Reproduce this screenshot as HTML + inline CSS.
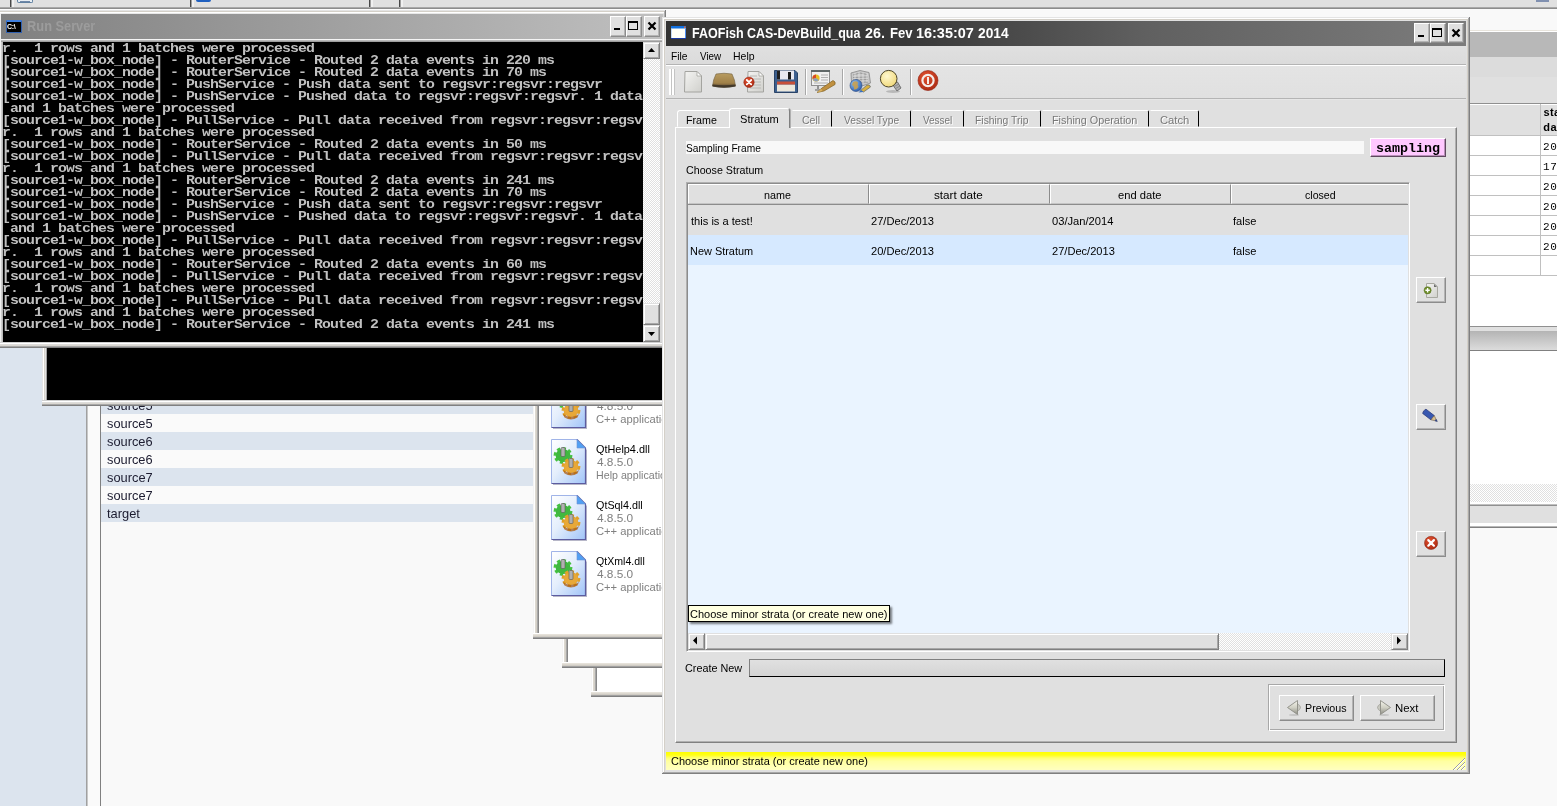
<!DOCTYPE html><html><head><meta charset="utf-8"><title>FAOFish CAS</title><style>
*{box-sizing:border-box;margin:0;padding:0}
html,body{width:1557px;height:806px;overflow:hidden;background:#f9f9f9}
body{position:relative;font-family:"Liberation Sans",sans-serif;font-size:11px;color:#000}
div,span,svg,pre{position:absolute}
.btn{background:#e0e0e0;border:1px solid;border-color:#fff #8c8c8c #8c8c8c #fff;box-shadow:inset -1px -1px 0 #b4b4b4}
.con{font-family:"Liberation Mono",monospace;font-size:13px;line-height:12px;color:#c0c0c0;white-space:pre;letter-spacing:-.8px;font-weight:bold;transform:scaleX(1.142857);transform-origin:0 0}
.btn2{background:#e0e0e0;border:1px solid;border-color:#e0e0e0 #808080 #808080 #e0e0e0;box-shadow:inset 1px 1px 0 #fff,inset -1px -1px 0 #a8a8a8}
.hd{background:#e0e0e0;border:1px solid;border-color:#fff #8c8c8c #c4c4c4 #fff}
.tab{border:1px solid;border-color:#fff #000 transparent transparent;border-radius:0 2px 0 0;background:#e0e0e0}
</style></head><body><div id="w" style="left:0;top:0;width:1557px;height:806px;will-change:transform;overflow:hidden">
<div style="left:0px;top:0px;width:1557px;height:7px;background:#e0e0e0"></div>
<div style="left:0px;top:7px;width:1557px;height:1px;background:#a8a8a8"></div>
<div style="left:0px;top:8px;width:1557px;height:1px;background:#8c8c8c"></div>
<div style="left:0px;top:9px;width:1557px;height:1px;background:#fcfcfc"></div>
<div style="left:10px;top:0px;width:1px;height:7px;background:#484848"></div>
<div style="left:11px;top:0px;width:1px;height:7px;background:#a0a0a0"></div>
<div style="left:12px;top:0px;width:2px;height:7px;background:#f0f0f0"></div>
<div style="left:190px;top:0px;width:1px;height:7px;background:#484848"></div>
<div style="left:191px;top:0px;width:1px;height:7px;background:#a0a0a0"></div>
<div style="left:192px;top:0px;width:2px;height:7px;background:#f0f0f0"></div>
<div style="left:369px;top:0px;width:1px;height:7px;background:#484848"></div>
<div style="left:370px;top:0px;width:1px;height:7px;background:#a0a0a0"></div>
<div style="left:371px;top:0px;width:2px;height:7px;background:#f0f0f0"></div>
<div style="left:399px;top:0px;width:1px;height:7px;background:#484848"></div>
<div style="left:400px;top:0px;width:1px;height:7px;background:#a0a0a0"></div>
<div style="left:401px;top:0px;width:2px;height:7px;background:#f0f0f0"></div>
<div style="left:17px;top:0px;width:16px;height:3px;border:1px solid #6080a0;border-top:0;border-radius:0 0 2px 2px;background:#e8eef4"></div>
<div style="left:20px;top:1px;width:10px;height:1px;background:#7088a8"></div>
<div style="left:196px;top:0px;width:15px;height:2px;background:#2060c0;border-radius:0 0 2px 2px"></div>
<div style="left:1536px;top:0px;width:13px;height:2px;background:#8090b0"></div>
<div style="left:0px;top:10px;width:86px;height:797px;background:#dce4ee"></div>
<div style="left:86px;top:10px;width:1px;height:797px;background:#a0a0a0"></div>
<div style="left:87px;top:10px;width:1px;height:797px;background:#c8c8c8"></div>
<div style="left:88px;top:10px;width:12px;height:797px;background:#fafafa"></div>
<div style="left:100px;top:10px;width:1px;height:797px;background:#808080"></div>
<div style="left:101px;top:396px;width:432px;height:18px;background:#dce4ee"></div>
<span style="left:107.25px;top:397px;font-size:13px;line-height:17px;color:#1c1c30;white-space:pre;transform:scaleX(0.9855);transform-origin:0.35px 0;">source5</span>
<div style="left:101px;top:414px;width:432px;height:18px;background:#fafafa"></div>
<span style="left:107.25px;top:415px;font-size:13px;line-height:17px;color:#1c1c30;white-space:pre;transform:scaleX(0.9855);transform-origin:0.35px 0;">source5</span>
<div style="left:101px;top:432px;width:432px;height:18px;background:#dce4ee"></div>
<span style="left:107.25px;top:433px;font-size:13px;line-height:17px;color:#1c1c30;white-space:pre;transform:scaleX(0.9861);transform-origin:0.35px 0;">source6</span>
<div style="left:101px;top:450px;width:432px;height:18px;background:#fafafa"></div>
<span style="left:107.25px;top:451px;font-size:13px;line-height:17px;color:#1c1c30;white-space:pre;transform:scaleX(0.9861);transform-origin:0.35px 0;">source6</span>
<div style="left:101px;top:468px;width:432px;height:18px;background:#dce4ee"></div>
<span style="left:107.25px;top:469px;font-size:13px;line-height:17px;color:#1c1c30;white-space:pre;transform:scaleX(0.9881);transform-origin:0.35px 0;">source7</span>
<div style="left:101px;top:486px;width:432px;height:18px;background:#fafafa"></div>
<span style="left:107.25px;top:487px;font-size:13px;line-height:17px;color:#1c1c30;white-space:pre;transform:scaleX(0.9881);transform-origin:0.35px 0;">source7</span>
<div style="left:101px;top:504px;width:432px;height:18px;background:#dce4ee"></div>
<span style="left:107.41px;top:505px;font-size:13px;line-height:17px;color:#1c1c30;white-space:pre;transform:scaleX(0.9892);transform-origin:0.19px 0;">target</span>
<div style="left:591px;top:640px;width:75px;height:57px;background:#fff"></div><div style="left:591px;top:640px;width:6px;height:57px;background:linear-gradient(90deg,#f4f4f4 0,#f4f4f4 1px,#fff 1px,#fff 2px,#dcd8d0 2px,#dcd8d0 3px,#d4d0c8 3px,#d4d0c8 4px,#a8a8a8 4px,#a8a8a8 5px,#888 5px)"></div><div style="left:591px;top:691px;width:75px;height:6px;background:linear-gradient(0deg,#808080 0,#808080 1px,#a0a0a0 1px,#a0a0a0 2px,#ccc8c0 2px,#d4d0c8 3px,#e4e0d8 4px,#e8e4dc 5px,#fff 5px)"></div>
<div style="left:562px;top:600px;width:104px;height:68px;background:#fff"></div><div style="left:562px;top:600px;width:6px;height:68px;background:linear-gradient(90deg,#f4f4f4 0,#f4f4f4 1px,#fff 1px,#fff 2px,#dcd8d0 2px,#dcd8d0 3px,#d4d0c8 3px,#d4d0c8 4px,#a8a8a8 4px,#a8a8a8 5px,#888 5px)"></div><div style="left:562px;top:662px;width:104px;height:6px;background:linear-gradient(0deg,#808080 0,#808080 1px,#a0a0a0 1px,#a0a0a0 2px,#ccc8c0 2px,#d4d0c8 3px,#e4e0d8 4px,#e8e4dc 5px,#fff 5px)"></div>
<div style="left:533px;top:380px;width:133px;height:259px;background:#fff"></div><div style="left:533px;top:380px;width:6px;height:259px;background:linear-gradient(90deg,#f4f4f4 0,#f4f4f4 1px,#fff 1px,#fff 2px,#dcd8d0 2px,#dcd8d0 3px,#d4d0c8 3px,#d4d0c8 4px,#a8a8a8 4px,#a8a8a8 5px,#888 5px)"></div><div style="left:533px;top:633px;width:133px;height:6px;background:linear-gradient(0deg,#808080 0,#808080 1px,#a0a0a0 1px,#a0a0a0 2px,#ccc8c0 2px,#d4d0c8 3px,#e4e0d8 4px,#e8e4dc 5px,#fff 5px)"></div>
<div style="left:539px;top:380px;width:123px;height:252px;overflow:hidden"><svg width="40" height="49" viewBox="0 0 40 49" style="left:11px;top:2px">
<defs><linearGradient id="pg0" x1="0" y1="0" x2="1" y2="1"><stop offset="0" stop-color="#ffffff"/><stop offset=".45" stop-color="#e4eefc"/><stop offset="1" stop-color="#a0c4f8"/></linearGradient></defs>
<path d="M3 3 H28 L37 12 V47 H3 Z" fill="#303060" opacity=".35"/>
<path d="M1.5 1.5 H27 L35.5 10 V45.5 H1.5 Z" fill="url(#pg0)"/>
<path d="M1.5 45.5 V1.5 H27" fill="none" stroke="#a0b4e8" stroke-width="1"/>
<path d="M27 1.5 L35.5 10 V45.5 H1.5" fill="none" stroke="#5c5ca0" stroke-width="1.2"/>
<path d="M27 1.5 V10 H35.5 Z" fill="#50a0f4" stroke="#7090d0" stroke-width=".6"/>
<ellipse cx="13" cy="17.5" rx="7.4" ry="6.4" fill="#38b838" stroke="#44c040" stroke-width="4" stroke-dasharray="3 2.3"/>
<ellipse cx="13" cy="17.5" rx="7" ry="6" fill="#40b840"/>
<ellipse cx="21" cy="28.5" rx="7.4" ry="6.4" fill="#e0a030" stroke="#e0a028" stroke-width="4" stroke-dasharray="3 2.3"/>
<ellipse cx="21" cy="28.5" rx="7" ry="6" fill="#e8a838"/>
<path d="M13 32 Q21 38 29 32 L27.5 35.5 Q21 39.5 14.5 35.5 Z" fill="#a85810" opacity=".7"/>
<rect x="11" y="9.5" width="4" height="9" rx="1" fill="#b0b0b0" stroke="#585858" stroke-width=".6"/>
<rect x="19" y="20.5" width="4" height="9" rx="1" fill="#b0b0b0" stroke="#585858" stroke-width=".6"/>
</svg><span style="left:57.56px;top:19px;font-size:11px;line-height:15px;color:#808080;white-space:pre;transform:scaleX(1.0765);transform-origin:0.24px 0;">4.8.5.0</span><span style="left:57.25px;top:32px;font-size:11px;line-height:15px;color:#808080;white-space:pre;transform:scaleX(1.0174);transform-origin:0.55px 0;">C++ applicatio</span><svg width="40" height="49" viewBox="0 0 40 49" style="left:11px;top:58px">
<defs><linearGradient id="pg1" x1="0" y1="0" x2="1" y2="1"><stop offset="0" stop-color="#ffffff"/><stop offset=".45" stop-color="#e4eefc"/><stop offset="1" stop-color="#a0c4f8"/></linearGradient></defs>
<path d="M3 3 H28 L37 12 V47 H3 Z" fill="#303060" opacity=".35"/>
<path d="M1.5 1.5 H27 L35.5 10 V45.5 H1.5 Z" fill="url(#pg1)"/>
<path d="M1.5 45.5 V1.5 H27" fill="none" stroke="#a0b4e8" stroke-width="1"/>
<path d="M27 1.5 L35.5 10 V45.5 H1.5" fill="none" stroke="#5c5ca0" stroke-width="1.2"/>
<path d="M27 1.5 V10 H35.5 Z" fill="#50a0f4" stroke="#7090d0" stroke-width=".6"/>
<ellipse cx="13" cy="17.5" rx="7.4" ry="6.4" fill="#38b838" stroke="#44c040" stroke-width="4" stroke-dasharray="3 2.3"/>
<ellipse cx="13" cy="17.5" rx="7" ry="6" fill="#40b840"/>
<ellipse cx="21" cy="28.5" rx="7.4" ry="6.4" fill="#e0a030" stroke="#e0a028" stroke-width="4" stroke-dasharray="3 2.3"/>
<ellipse cx="21" cy="28.5" rx="7" ry="6" fill="#e8a838"/>
<path d="M13 32 Q21 38 29 32 L27.5 35.5 Q21 39.5 14.5 35.5 Z" fill="#a85810" opacity=".7"/>
<rect x="11" y="9.5" width="4" height="9" rx="1" fill="#b0b0b0" stroke="#585858" stroke-width=".6"/>
<rect x="19" y="20.5" width="4" height="9" rx="1" fill="#b0b0b0" stroke="#585858" stroke-width=".6"/>
</svg><span style="left:57.28px;top:62px;font-size:11px;line-height:15px;color:#000;white-space:pre;transform:scaleX(0.9892);transform-origin:0.52px 0;">QtHelp4.dll</span><span style="left:57.56px;top:75px;font-size:11px;line-height:15px;color:#808080;white-space:pre;transform:scaleX(1.0765);transform-origin:0.24px 0;">4.8.5.0</span><span style="left:56.90px;top:88px;font-size:11px;line-height:15px;color:#808080;white-space:pre;transform:scaleX(0.9690);transform-origin:0.90px 0;">Help applicatio</span><svg width="40" height="49" viewBox="0 0 40 49" style="left:11px;top:114px">
<defs><linearGradient id="pg2" x1="0" y1="0" x2="1" y2="1"><stop offset="0" stop-color="#ffffff"/><stop offset=".45" stop-color="#e4eefc"/><stop offset="1" stop-color="#a0c4f8"/></linearGradient></defs>
<path d="M3 3 H28 L37 12 V47 H3 Z" fill="#303060" opacity=".35"/>
<path d="M1.5 1.5 H27 L35.5 10 V45.5 H1.5 Z" fill="url(#pg2)"/>
<path d="M1.5 45.5 V1.5 H27" fill="none" stroke="#a0b4e8" stroke-width="1"/>
<path d="M27 1.5 L35.5 10 V45.5 H1.5" fill="none" stroke="#5c5ca0" stroke-width="1.2"/>
<path d="M27 1.5 V10 H35.5 Z" fill="#50a0f4" stroke="#7090d0" stroke-width=".6"/>
<ellipse cx="13" cy="17.5" rx="7.4" ry="6.4" fill="#38b838" stroke="#44c040" stroke-width="4" stroke-dasharray="3 2.3"/>
<ellipse cx="13" cy="17.5" rx="7" ry="6" fill="#40b840"/>
<ellipse cx="21" cy="28.5" rx="7.4" ry="6.4" fill="#e0a030" stroke="#e0a028" stroke-width="4" stroke-dasharray="3 2.3"/>
<ellipse cx="21" cy="28.5" rx="7" ry="6" fill="#e8a838"/>
<path d="M13 32 Q21 38 29 32 L27.5 35.5 Q21 39.5 14.5 35.5 Z" fill="#a85810" opacity=".7"/>
<rect x="11" y="9.5" width="4" height="9" rx="1" fill="#b0b0b0" stroke="#585858" stroke-width=".6"/>
<rect x="19" y="20.5" width="4" height="9" rx="1" fill="#b0b0b0" stroke="#585858" stroke-width=".6"/>
</svg><span style="left:57.28px;top:118px;font-size:11px;line-height:15px;color:#000;white-space:pre;transform:scaleX(0.9797);transform-origin:0.52px 0;">QtSql4.dll</span><span style="left:57.56px;top:131px;font-size:11px;line-height:15px;color:#808080;white-space:pre;transform:scaleX(1.0765);transform-origin:0.24px 0;">4.8.5.0</span><span style="left:57.25px;top:144px;font-size:11px;line-height:15px;color:#808080;white-space:pre;transform:scaleX(1.0174);transform-origin:0.55px 0;">C++ applicatio</span><svg width="40" height="49" viewBox="0 0 40 49" style="left:11px;top:170px">
<defs><linearGradient id="pg3" x1="0" y1="0" x2="1" y2="1"><stop offset="0" stop-color="#ffffff"/><stop offset=".45" stop-color="#e4eefc"/><stop offset="1" stop-color="#a0c4f8"/></linearGradient></defs>
<path d="M3 3 H28 L37 12 V47 H3 Z" fill="#303060" opacity=".35"/>
<path d="M1.5 1.5 H27 L35.5 10 V45.5 H1.5 Z" fill="url(#pg3)"/>
<path d="M1.5 45.5 V1.5 H27" fill="none" stroke="#a0b4e8" stroke-width="1"/>
<path d="M27 1.5 L35.5 10 V45.5 H1.5" fill="none" stroke="#5c5ca0" stroke-width="1.2"/>
<path d="M27 1.5 V10 H35.5 Z" fill="#50a0f4" stroke="#7090d0" stroke-width=".6"/>
<ellipse cx="13" cy="17.5" rx="7.4" ry="6.4" fill="#38b838" stroke="#44c040" stroke-width="4" stroke-dasharray="3 2.3"/>
<ellipse cx="13" cy="17.5" rx="7" ry="6" fill="#40b840"/>
<ellipse cx="21" cy="28.5" rx="7.4" ry="6.4" fill="#e0a030" stroke="#e0a028" stroke-width="4" stroke-dasharray="3 2.3"/>
<ellipse cx="21" cy="28.5" rx="7" ry="6" fill="#e8a838"/>
<path d="M13 32 Q21 38 29 32 L27.5 35.5 Q21 39.5 14.5 35.5 Z" fill="#a85810" opacity=".7"/>
<rect x="11" y="9.5" width="4" height="9" rx="1" fill="#b0b0b0" stroke="#585858" stroke-width=".6"/>
<rect x="19" y="20.5" width="4" height="9" rx="1" fill="#b0b0b0" stroke="#585858" stroke-width=".6"/>
</svg><span style="left:57.28px;top:174px;font-size:11px;line-height:15px;color:#000;white-space:pre;transform:scaleX(0.9618);transform-origin:0.52px 0;">QtXml4.dll</span><span style="left:57.56px;top:187px;font-size:11px;line-height:15px;color:#808080;white-space:pre;transform:scaleX(1.0765);transform-origin:0.24px 0;">4.8.5.0</span><span style="left:57.25px;top:200px;font-size:11px;line-height:15px;color:#808080;white-space:pre;transform:scaleX(1.0174);transform-origin:0.55px 0;">C++ applicatio</span></div>
<div style="left:42px;top:340px;width:624px;height:66px;background:#000"></div>
<div style="left:42px;top:340px;width:5px;height:66px;background:linear-gradient(90deg,#e4e4e4 0,#e4e4e4 1px,#fff 1px,#fff 2px,#d8d4cc 2px,#d8d4cc 3px,#e0e0e0 3px,#e0e0e0 4px,#a0a0a0 4px)"></div>
<div style="left:42px;top:400px;width:624px;height:6px;background:linear-gradient(0deg,#808080 0,#808080 1px,#a8a8a8 1px,#a8a8a8 2px,#d8d4cc 2px,#e0e0e0 4px,#fff 4px,#fff 5px,#d0d0d0 5px)"></div>
<div style="left:0px;top:10px;width:666px;height:338px;background:#d8d8d8"></div><div style="left:0px;top:10px;width:666px;height:1px;background:#e4e4e4"></div><div style="left:0px;top:11px;width:665px;height:1px;background:#d4d0c8"></div><div style="left:0px;top:12px;width:664px;height:1px;background:#fff"></div><div style="left:0px;top:13px;width:664px;height:1px;background:#e8e8e8"></div><div style="left:665px;top:10px;width:1px;height:338px;background:#808080"></div><div style="left:664px;top:11px;width:1px;height:336px;background:#b0b0b0"></div><div style="left:0px;top:13px;width:1px;height:330px;background:#f0f0f0"></div><div style="left:1px;top:14px;width:662px;height:25px;background:linear-gradient(90deg,#808080,#c0c0c0)"></div><div style="left:6px;top:20px;width:16px;height:13px;background:#000;border:1px solid #3060b0;border-top:2px solid #4080e0;border-radius:1px"><span style="left:0;top:1px;font-size:7px;line-height:8px;font-weight:bold;color:#fff;letter-spacing:-.3px;white-space:pre">C:\</span></div><span style="left:26.68px;top:17px;font-size:14px;line-height:18px;color:#9c9c9c;white-space:pre;font-weight:bold;transform:scaleX(0.9134);transform-origin:0.92px 0;">Run Server</span><div class="btn" style="left:610px;top:16px;width:16px;height:21px;"><div style="left:3px;top:11px;width:6px;height:2px;background:#000"></div></div><div class="btn" style="left:626px;top:16px;width:16px;height:21px;"><div style="left:1px;top:4px;width:10px;height:9px;border:1px solid #000;border-top:2px solid #000"></div></div><div class="btn" style="left:644px;top:16px;width:16px;height:21px;"><svg width="16" height="20" style="left:-1px;top:-1px"><path d="M4.5 6.5 L11.5 13.5 M11.5 6.5 L4.5 13.5" stroke="#000" stroke-width="2.2"/></svg></div><div style="left:1px;top:39px;width:662px;height:1px;background:#f4f4f4"></div><div style="left:1px;top:40px;width:662px;height:2px;background:linear-gradient(180deg,#c8c8c8,#909090)"></div><div style="left:1px;top:42px;width:2px;height:300px;background:linear-gradient(90deg,#d8d8d8,#b0b0b0)"></div><div style="left:3px;top:42px;width:640px;height:300px;background:#000;overflow:hidden"></div><pre class="con" style="left:2px;top:43px">r.  1 rows and 1 batches were processed
[source1-w_box_node] - RouterService - Routed 2 data events in 220 ms
[source1-w_box_node] - RouterService - Routed 2 data events in 70 ms
[source1-w_box_node] - PushService - Push data sent to regsvr:regsvr:regsvr
[source1-w_box_node] - PushService - Pushed data to regsvr:regsvr:regsvr. 1 data
 and 1 batches were processed
[source1-w_box_node] - PullService - Pull data received from regsvr:regsvr:regsv
r.  1 rows and 1 batches were processed
[source1-w_box_node] - RouterService - Routed 2 data events in 50 ms
[source1-w_box_node] - PullService - Pull data received from regsvr:regsvr:regsv
r.  1 rows and 1 batches were processed
[source1-w_box_node] - RouterService - Routed 2 data events in 241 ms
[source1-w_box_node] - RouterService - Routed 2 data events in 70 ms
[source1-w_box_node] - PushService - Push data sent to regsvr:regsvr:regsvr
[source1-w_box_node] - PushService - Pushed data to regsvr:regsvr:regsvr. 1 data
 and 1 batches were processed
[source1-w_box_node] - PullService - Pull data received from regsvr:regsvr:regsv
r.  1 rows and 1 batches were processed
[source1-w_box_node] - RouterService - Routed 2 data events in 60 ms
[source1-w_box_node] - PullService - Pull data received from regsvr:regsvr:regsv
r.  1 rows and 1 batches were processed
[source1-w_box_node] - PullService - Pull data received from regsvr:regsvr:regsv
r.  1 rows and 1 batches were processed
[source1-w_box_node] - RouterService - Routed 2 data events in 241 ms</pre><div style="left:643px;top:42px;width:17px;height:300px;background:#f0f0f0 conic-gradient(#fff 25%,#e0e0e0 0 50%,#fff 0 75%,#e0e0e0 0) 0 0/2px 2px"></div><div class="btn2" style="left:643px;top:42px;width:17px;height:17px;"><svg width="15" height="15" style="left:0;top:0"><path d="M4 9 L7.5 5 L11 9 Z" fill="#000"/></svg></div><div class="btn2" style="left:643px;top:303px;width:17px;height:22px;"></div><div class="btn2" style="left:643px;top:325px;width:17px;height:17px;"><svg width="15" height="15" style="left:0;top:0"><path d="M4 6 L7.5 10 L11 6 Z" fill="#000"/></svg></div><div style="left:0px;top:342px;width:666px;height:6px;background:linear-gradient(0deg,#808080 0,#808080 1px,#a8a8a8 1px,#a8a8a8 2px,#d8d4cc 2px,#e0e0e0 4px,#fff 4px,#fff 5px,#d0d0d0 5px)"></div>
<div style="left:1470px;top:9px;width:87px;height:519px;background:#fff"></div><div style="left:1470px;top:9px;width:87px;height:21px;background:#f9f9f9"></div><div style="left:1470px;top:30px;width:87px;height:1px;background:#e8e4dc"></div><div style="left:1470px;top:31px;width:87px;height:1px;background:#fff"></div><div style="left:1470px;top:32px;width:87px;height:25px;background:#b8b8b8"></div><div style="left:1470px;top:57px;width:87px;height:20px;background:#dcdcdc"></div><div style="left:1470px;top:77px;width:87px;height:26px;background:#e0e0e0"></div><div style="left:1470px;top:103px;width:87px;height:1px;background:#909090"></div><div style="left:1470px;top:104px;width:87px;height:31px;background:#e0e0e0"></div><div style="left:1470px;top:104px;width:87px;height:1px;background:#fff"></div><span style="left:1543.41px;top:105px;font-size:11px;line-height:15px;color:#000;white-space:pre;font-weight:bold;letter-spacing:.4px;">sta</span><span style="left:1543.35px;top:120px;font-size:11px;line-height:15px;color:#000;white-space:pre;font-weight:bold;letter-spacing:.4px;">da</span><div style="left:1470px;top:135px;width:87px;height:1px;background:#c0c0c0"></div><div style="left:1470px;top:155px;width:87px;height:1px;background:#c0c0c0"></div><div style="left:1470px;top:175px;width:87px;height:1px;background:#c0c0c0"></div><div style="left:1470px;top:195px;width:87px;height:1px;background:#c0c0c0"></div><div style="left:1470px;top:215px;width:87px;height:1px;background:#c0c0c0"></div><div style="left:1470px;top:235px;width:87px;height:1px;background:#c0c0c0"></div><div style="left:1470px;top:255px;width:87px;height:1px;background:#c0c0c0"></div><div style="left:1470px;top:275px;width:87px;height:1px;background:#c0c0c0"></div><div style="left:1540px;top:104px;width:1px;height:172px;background:#c0c0c0"></div><span style="left:1543.03px;top:140px;font-size:11px;line-height:15px;color:#000;white-space:pre;font-family:'Liberation Mono',monospace;letter-spacing:.6px;">20</span><span style="left:1543.01px;top:160px;font-size:11px;line-height:15px;color:#000;white-space:pre;font-family:'Liberation Mono',monospace;letter-spacing:.6px;">17</span><span style="left:1543.03px;top:180px;font-size:11px;line-height:15px;color:#000;white-space:pre;font-family:'Liberation Mono',monospace;letter-spacing:.6px;">20</span><span style="left:1543.03px;top:200px;font-size:11px;line-height:15px;color:#000;white-space:pre;font-family:'Liberation Mono',monospace;letter-spacing:.6px;">20</span><span style="left:1543.03px;top:220px;font-size:11px;line-height:15px;color:#000;white-space:pre;font-family:'Liberation Mono',monospace;letter-spacing:.6px;">20</span><span style="left:1543.03px;top:240px;font-size:11px;line-height:15px;color:#000;white-space:pre;font-family:'Liberation Mono',monospace;letter-spacing:.6px;">20</span><div style="left:1470px;top:326px;width:87px;height:1px;background:#909090"></div><div style="left:1470px;top:327px;width:87px;height:4px;background:#e0e0e0"></div><div style="left:1470px;top:331px;width:87px;height:19px;background:linear-gradient(180deg,#b4b4b4,#dcdcdc)"></div><div style="left:1470px;top:350px;width:87px;height:1px;background:#808080"></div><div style="left:1470px;top:484px;width:87px;height:18px;background:#f0f0f0 conic-gradient(#fff 25%,#e0e0e0 0 50%,#fff 0 75%,#e0e0e0 0) 0 0/2px 2px"></div><div style="left:1470px;top:502px;width:87px;height:2px;background:#fff"></div><div style="left:1470px;top:504px;width:87px;height:1px;background:#c0c0c0"></div><div style="left:1470px;top:505px;width:87px;height:1px;background:#909090"></div><div style="left:1470px;top:506px;width:87px;height:17px;background:#e0e0e0"></div><div style="left:1470px;top:523px;width:87px;height:3px;background:#fff"></div><div style="left:1470px;top:526px;width:87px;height:1px;background:#b8b8b8"></div><div style="left:1470px;top:527px;width:87px;height:1px;background:#808080"></div>
<div style="left:662px;top:17px;width:808px;height:757px;background:#e0e0e0"></div><div style="left:662px;top:17px;width:808px;height:1px;background:#e4e4e4"></div><div style="left:663px;top:18px;width:806px;height:1px;background:#fff"></div><div style="left:663px;top:19px;width:806px;height:1px;background:#d4d0c8"></div><div style="left:662px;top:17px;width:1px;height:757px;background:#e4e4e4"></div><div style="left:663px;top:18px;width:1px;height:755px;background:#fff"></div><div style="left:664px;top:19px;width:1px;height:753px;background:#d4d0c8"></div><div style="left:1469px;top:17px;width:1px;height:757px;background:#808080"></div><div style="left:1468px;top:18px;width:1px;height:755px;background:#a8a8a8"></div><div style="left:1467px;top:19px;width:1px;height:753px;background:#d4d0c8"></div><div style="left:662px;top:773px;width:808px;height:1px;background:#808080"></div><div style="left:663px;top:772px;width:806px;height:1px;background:#a8a8a8"></div><div style="left:666px;top:21px;width:800px;height:25px;background:linear-gradient(90deg,#333 0,#383838 30%,#606060 60%,#7c7c7c 100%)"></div><svg width="16" height="14" viewBox="0 0 16 14" style="left:671px;top:26px"><rect x="0" y="1" width="15" height="12" fill="#fffff8" stroke="none"/><rect x="0" y="0" width="15" height="2.5" fill="#1070e0"/><rect x="13" y="0.5" width="1.5" height="1.5" fill="#f06030"/><path d="M0 12.5 H15" fill="none" stroke="#1838a0" stroke-width="1"/><path d="M14.5 2.5 V12" fill="none" stroke="#5090f0" stroke-width="1"/><path d="M0.5 2.5 V12" fill="none" stroke="#a0c0f0" stroke-width="1" opacity=".6"/></svg><span style="left:692.48px;top:24px;font-size:14px;line-height:18px;color:#fff;white-space:pre;font-weight:bold;transform:scaleX(0.8947);transform-origin:0.92px 0;">FAOFish </span><span style="left:747.13px;top:24px;font-size:14px;line-height:18px;color:#fff;white-space:pre;font-weight:bold;transform:scaleX(0.8883);transform-origin:0.57px 0;">CAS-DevBuild_qua </span><span style="left:865.32px;top:24px;font-size:14px;line-height:18px;color:#fff;white-space:pre;font-weight:bold;transform:scaleX(1.0212);transform-origin:0.48px 0;">26. </span><span style="left:889.68px;top:24px;font-size:14px;line-height:18px;color:#fff;white-space:pre;font-weight:bold;transform:scaleX(0.9334);transform-origin:0.92px 0;">Fev </span><span style="left:916.23px;top:24px;font-size:14px;line-height:18px;color:#fff;white-space:pre;font-weight:bold;transform:scaleX(1.0317);transform-origin:0.87px 0;">16:35:07 </span><span style="left:978.32px;top:24px;font-size:14px;line-height:18px;color:#fff;white-space:pre;font-weight:bold;transform:scaleX(0.9807);transform-origin:0.48px 0;">2014 </span><div class="btn" style="left:1414px;top:23px;width:16px;height:20px;"><div style="left:3px;top:11px;width:6px;height:2px;background:#000"></div></div><div class="btn" style="left:1430px;top:23px;width:16px;height:20px;"><div style="left:1px;top:4px;width:10px;height:9px;border:1px solid #000;border-top:2px solid #000"></div></div><div class="btn" style="left:1448px;top:23px;width:16px;height:20px;"><svg width="16" height="20" style="left:-1px;top:-1px"><path d="M4.5 6.5 L11.5 13.5 M11.5 6.5 L4.5 13.5" stroke="#000" stroke-width="2.2"/></svg></div><div style="left:666px;top:46px;width:800px;height:18px;background:linear-gradient(180deg,#e0e0e0,#dbdbdb)"></div><div style="left:666px;top:64px;width:800px;height:1px;background:#b4b4b4"></div><div style="left:666px;top:65px;width:800px;height:1px;background:#fff"></div><span style="left:670.90px;top:49px;font-size:11px;line-height:15px;color:#000;white-space:pre;transform:scaleX(0.9305);transform-origin:0.90px 0;">File</span><span style="left:699.86px;top:49px;font-size:11px;line-height:15px;color:#000;white-space:pre;transform:scaleX(0.8972);transform-origin:0.04px 0;">View</span><span style="left:733.00px;top:49px;font-size:11px;line-height:15px;color:#000;white-space:pre;transform:scaleX(0.9542);transform-origin:0.90px 0;">Help</span><div style="left:666px;top:66px;width:800px;height:32px;background:linear-gradient(180deg,#e4e4e4,#e0e0e0)"></div><div style="left:669px;top:69px;width:3px;height:26px;background:#fff;border-right:1px solid #c4c4c4"></div><div style="left:672px;top:69px;width:3px;height:26px;background:#fff;border-right:1px solid #c4c4c4"></div><div style="left:805px;top:69px;width:1px;height:26px;background:#a8a8a8"></div><div style="left:806px;top:69px;width:1px;height:26px;background:#fff"></div><div style="left:842px;top:69px;width:1px;height:26px;background:#a8a8a8"></div><div style="left:843px;top:69px;width:1px;height:26px;background:#fff"></div><div style="left:910px;top:69px;width:1px;height:26px;background:#a8a8a8"></div><div style="left:911px;top:69px;width:1px;height:26px;background:#fff"></div><div style="left:666px;top:98px;width:800px;height:1px;background:#b4b4b4"></div><div style="left:666px;top:99px;width:800px;height:1px;background:#e6e6e6"></div><svg width="1" height="1" viewBox="0 0 1 1" style="left:0px;top:0px"><defs><linearGradient id="gp" x1="0" y1="0" x2="1" y2="1"><stop offset="0" stop-color="#f4f4f2"/><stop offset="1" stop-color="#d0d0cc"/></linearGradient><linearGradient id="gb" x1="0" y1="0" x2="0" y2="1"><stop offset="0" stop-color="#b89c60"/><stop offset=".7" stop-color="#a08048"/><stop offset="1" stop-color="#504030"/></linearGradient><radialGradient id="gr" cx=".4" cy=".3" r=".8"><stop offset="0" stop-color="#e05030"/><stop offset="1" stop-color="#a82810"/></radialGradient><radialGradient id="gy" cx=".4" cy=".35" r=".7"><stop offset="0" stop-color="#fff8d0"/><stop offset="1" stop-color="#f0d878"/></radialGradient><radialGradient id="gg" cx=".35" cy=".3" r=".8"><stop offset="0" stop-color="#90c0f0"/><stop offset="1" stop-color="#2858a8"/></radialGradient><linearGradient id="ga" x1="0" y1="0" x2="0" y2="1"><stop offset="0" stop-color="#f4f4ec"/><stop offset=".5" stop-color="#d0d0c4"/><stop offset="1" stop-color="#8c8c84"/></linearGradient></defs></svg><svg width="20" height="24" viewBox="0 0 20 24" style="left:683px;top:70px"><path d="M2 1.5 H14 L18.5 6 V22 H1.5 Z" fill="url(#gp)" stroke="#a4a4a0" stroke-width="1"/><path d="M14 1.5 V6 H18.5 Z" fill="#fff" stroke="#a4a4a0" stroke-width=".8"/></svg><svg width="26" height="18" viewBox="0 0 26 18" style="left:711px;top:72px"><path d="M5 2 Q13 0.5 21 2 Q24 8 24.5 14 Q13 16.5 1.5 14 Q2 8 5 2 Z" fill="url(#gb)" stroke="#706040" stroke-width=".6"/><path d="M1.5 12.5 Q13 14 24.5 12.5 L24.5 14.5 Q13 17 1.5 14.5 Z" fill="#3c3428" opacity=".85"/></svg><svg width="24" height="24" viewBox="0 0 24 24" style="left:742px;top:70px"><path d="M6 1.5 H17 L21.5 6 V22 H5.5 Z" fill="url(#gp)" stroke="#a4a4a0" stroke-width="1"/><path d="M17 1.5 V6 H21.5 Z" fill="#fff" stroke="#a4a4a0" stroke-width=".8"/><path d="M8 6 H15 M8 9 H19 M11 12 H19 M11 15 H19 M8 18 H19" stroke="#b8b8b4" stroke-width="1"/><circle cx="7" cy="12.2" r="5.2" fill="url(#gr)" stroke="#902010" stroke-width=".5"/><path d="M4.8 10 L9.2 14.4 M9.2 10 L4.8 14.4" stroke="#fff" stroke-width="1.8" stroke-linecap="round"/></svg><svg width="26" height="25" viewBox="0 0 26 25" style="left:773px;top:69px"><path d="M1.5 1.5 H22 L24.5 4 V23.5 H1.5 Z" fill="#3c5f8e" stroke="#2a4468" stroke-width="1"/><rect x="4" y="1.5" width="17" height="9" fill="#e8e8f0"/><rect x="4" y="1.5" width="3" height="9" fill="#202020"/><rect x="15" y="3" width="3" height="7.5" fill="#181818"/><rect x="4" y="12.5" width="18" height="3.2" fill="#c85038"/><rect x="4" y="15.7" width="18" height="6.8" fill="#ece8dc"/></svg><svg width="27" height="26" viewBox="0 0 27 26" style="left:810px;top:69px"><rect x="1.5" y="1.5" width="18" height="15" fill="#f0f0f0" stroke="#909090" stroke-width="1"/><rect x="1" y="1" width="19" height="2" fill="#606868"/><path d="M11 6 H18 M11 8.5 H18 M11 11 H18 M4 14 H18" stroke="#b0b0b0" stroke-width="1"/><circle cx="6" cy="9" r="3.6" fill="#e8c020"/><path d="M6 9 L6 5.4 A3.6 3.6 0 0 0 2.6 10 Z" fill="#d84828"/><path d="M6 9 L2.6 10 A3.6 3.6 0 0 0 9 11 Z" fill="#90a0b8"/><path d="M8 17 V20 M5 21 H11" stroke="#606060" stroke-width="1.2"/><path d="M7 23.5 L12 19 L23 11.5 Q26 12.5 25 15.5 L14 22 Z" fill="#c09040" stroke="#806020" stroke-width=".7"/><path d="M7 23.5 L11 19.8 L12.5 22 Z" fill="#d8b060"/></svg><svg width="25" height="26" viewBox="0 0 25 26" style="left:848px;top:69px"><path d="M3 4 L12 1.5 L21 3.5 L22.5 14 L14 17 L3.5 14 Z" fill="#c8c8c8" stroke="#888" stroke-width=".8"/><path d="M5 6 L12 4 L19 5.5 M5 8.5 L20 8 M5 11 L20 10.5 M9 13.5 L20 13" stroke="#989898" stroke-width="1" fill="none"/><path d="M7 4 V13 M11 3 V14 M15 3.5 V14 M19 4 V13" stroke="#e4e4e4" stroke-width=".8" fill="none"/><circle cx="8" cy="16.5" r="6" fill="url(#gg)" stroke="#284880" stroke-width=".6"/><path d="M5 13 Q8 11.5 10 13.5 Q9 16 10.5 18 Q8.5 21 6 20.5 Q6.5 17 4 16 Z" fill="#c8a050" opacity=".9"/><path d="M12.5 21.5 L19 16 Q22 15 22.5 18 L15.5 23 Z" fill="#d8b040" stroke="#606870" stroke-width=".7"/><path d="M10.5 23.5 L13 21 L15.5 23 Z" fill="#3870c0"/></svg><svg width="25" height="26" viewBox="0 0 25 26" style="left:878px;top:69px"><ellipse cx="15" cy="22.5" rx="7" ry="1.5" fill="#000" opacity=".18"/><path d="M14.5 15.5 L19.5 13 L23 19 L19 22 Z" fill="#b0b0b0" stroke="#606060" stroke-width=".8"/><path d="M16 17.5 L21 15 M17.5 19.5 L22 17" stroke="#808080" stroke-width=".8"/><circle cx="10.7" cy="9.7" r="8.3" fill="url(#gy)" stroke="#4c4428" stroke-width="1"/></svg><svg width="24" height="24" viewBox="0 0 24 24" style="left:916px;top:69px"><circle cx="12" cy="11.5" r="10" fill="url(#gr)" stroke="#902010" stroke-width=".6"/><circle cx="12" cy="11.5" r="5.6" fill="none" stroke="#f4ece8" stroke-width="2.2"/><rect x="11" y="8" width="2" height="7" fill="#f4ece8"/></svg><div style="left:675px;top:127px;width:782px;height:616px;border:1px solid;border-color:#fff #808080 #808080 #fff;box-shadow:inset -1px -1px 0 #b0b0b0"></div><div class="tab" style="left:677px;top:110px;width:54px;height:17px;border-color:#fff #a0a0a0 transparent #fff;border-radius:3px 0 0 0"></div><span style="left:685.70px;top:113px;font-size:11px;line-height:15px;color:#000;white-space:pre;transform:scaleX(0.9706);transform-origin:0.90px 0;">Frame</span><div class="tab" style="left:792px;top:110px;width:40px;height:17px;"></div><span style="left:802.25px;top:113px;font-size:11px;line-height:15px;color:#787878;white-space:pre;transform:scaleX(0.9560);transform-origin:0.55px 0;text-shadow:1px 1px 0 #fff;">Cell</span><div class="tab" style="left:833px;top:110px;width:78px;height:17px;"></div><span style="left:843.96px;top:113px;font-size:11px;line-height:15px;color:#787878;white-space:pre;transform:scaleX(0.9320);transform-origin:0.04px 0;text-shadow:1px 1px 0 #fff;">Vessel Type</span><div class="tab" style="left:912px;top:110px;width:52px;height:17px;"></div><span style="left:922.86px;top:113px;font-size:11px;line-height:15px;color:#787878;white-space:pre;transform:scaleX(0.9040);transform-origin:0.04px 0;text-shadow:1px 1px 0 #fff;">Vessel</span><div class="tab" style="left:965px;top:110px;width:76px;height:17px;"></div><span style="left:975.00px;top:113px;font-size:11px;line-height:15px;color:#787878;white-space:pre;transform:scaleX(0.9388);transform-origin:0.90px 0;text-shadow:1px 1px 0 #fff;">Fishing Trip</span><div class="tab" style="left:1042px;top:110px;width:107px;height:17px;"></div><span style="left:1051.80px;top:113px;font-size:11px;line-height:15px;color:#787878;white-space:pre;transform:scaleX(0.9822);transform-origin:0.90px 0;text-shadow:1px 1px 0 #fff;">Fishing Operation</span><div class="tab" style="left:1150px;top:110px;width:49px;height:17px;"></div><span style="left:1160.05px;top:113px;font-size:11px;line-height:15px;color:#787878;white-space:pre;transform:scaleX(1.0190);transform-origin:0.55px 0;text-shadow:1px 1px 0 #fff;">Catch</span><div class="tab" style="left:729px;top:108px;width:61px;height:20px;border-color:#fff #808080 transparent #fff;border-radius:3px 3px 0 0;box-shadow:1px 0 0 #b0b0b0;border-bottom:0"></div><span style="left:740.30px;top:112px;font-size:11px;line-height:15px;color:#000;white-space:pre;transform:scaleX(1.0080);transform-origin:0.49px 0;">Stratum</span><div style="left:686px;top:141px;width:678px;height:13px;background:#f8f8f8"></div><span style="left:685.71px;top:141px;font-size:11px;line-height:15px;color:#000;white-space:pre;transform:scaleX(0.9270);transform-origin:0.49px 0;">Sampling Frame</span><div style="left:1370px;top:138px;width:76px;height:19px;background:#ffc8ff;border:1px solid;border-color:#fff #604860 #604860 #fff;box-shadow:inset -1px -1px 0 #b890b8"></div><span style="left:1375.93px;top:140px;font-size:13px;line-height:17px;color:#000;white-space:pre;font-weight:bold;font-family:'Liberation Mono',monospace;transform:scaleX(1.0260);transform-origin:0.77px 0;">sampling</span><span style="left:685.65px;top:163px;font-size:11px;line-height:15px;color:#000;white-space:pre;transform:scaleX(0.9716);transform-origin:0.55px 0;">Choose Stratum</span><div style="left:686px;top:182px;width:724px;height:470px;background:#eaf4ff;border:1px solid;border-color:#b0b0b0 #fff #fff #b0b0b0;box-shadow:inset -1px -1px 0 #e0e0e0"></div><div style="left:687px;top:183px;width:722px;height:1px;background:#8c8c8c"></div><div style="left:687px;top:183px;width:1px;height:468px;background:#8c8c8c"></div><div class="hd" style="left:688px;top:184px;width:181px;height:20px;"></div><span style="left:763.87px;top:188px;font-size:11px;line-height:15px;color:#000;white-space:pre;transform:scaleX(0.9771);transform-origin:0.73px 0;">name</span><div class="hd" style="left:869px;top:184px;width:181px;height:20px;"></div><span style="left:934.30px;top:188px;font-size:11px;line-height:15px;color:#000;white-space:pre;transform:scaleX(1.0626);transform-origin:0.30px 0;">start date</span><div class="hd" style="left:1050px;top:184px;width:181px;height:20px;"></div><span style="left:1118.14px;top:188px;font-size:11px;line-height:15px;color:#000;white-space:pre;transform:scaleX(1.0151);transform-origin:0.46px 0;">end date</span><div class="hd" style="left:1231px;top:184px;width:177px;height:20px;border-right-color:#e0e0e0"></div><span style="left:1305.24px;top:188px;font-size:11px;line-height:15px;color:#000;white-space:pre;transform:scaleX(0.9633);transform-origin:0.46px 0;">closed</span><div style="left:688px;top:204px;width:720px;height:1px;background:#8c8c8c"></div><div style="left:688px;top:205px;width:720px;height:30px;background:#e0e0e0"></div><div style="left:688px;top:235px;width:720px;height:30px;background:#d6e9ff"></div><span style="left:690.63px;top:214px;font-size:11px;line-height:15px;color:#000;white-space:pre;transform:scaleX(1.0105);transform-origin:0.16px 0;">this is a test!</span><span style="left:870.95px;top:214px;font-size:11px;line-height:15px;color:#000;white-space:pre;transform:scaleX(1.0105);transform-origin:0.55px 0;">27/Dec/2013</span><span style="left:1051.97px;top:214px;font-size:11px;line-height:15px;color:#000;white-space:pre;transform:scaleX(1.0149);transform-origin:0.43px 0;">03/Jan/2014</span><span style="left:1233.45px;top:214px;font-size:11px;line-height:15px;color:#000;white-space:pre;transform:scaleX(1.0091);transform-origin:0.15px 0;">false</span><span style="left:689.90px;top:244px;font-size:11px;line-height:15px;color:#000;white-space:pre;transform:scaleX(0.9927);transform-origin:0.90px 0;">New Stratum</span><span style="left:870.95px;top:244px;font-size:11px;line-height:15px;color:#000;white-space:pre;transform:scaleX(1.0105);transform-origin:0.55px 0;">20/Dec/2013</span><span style="left:1051.85px;top:244px;font-size:11px;line-height:15px;color:#000;white-space:pre;transform:scaleX(1.0072);transform-origin:0.55px 0;">27/Dec/2013</span><span style="left:1233.45px;top:244px;font-size:11px;line-height:15px;color:#000;white-space:pre;transform:scaleX(1.0091);transform-origin:0.15px 0;">false</span><div style="left:688px;top:605px;width:202px;height:17px;background:#ffffe1;border:1px solid #000;box-shadow:2px 2px 2px rgba(0,0,0,.5)"></div><span style="left:689.95px;top:607px;font-size:11px;line-height:15px;color:#000;white-space:pre;transform:scaleX(0.9997);transform-origin:0.55px 0;">Choose minor strata (or create new one)</span><div style="left:688px;top:633px;width:720px;height:17px;background:#f0f0f0 conic-gradient(#fff 25%,#e0e0e0 0 50%,#fff 0 75%,#e0e0e0 0) 0 0/2px 2px"></div><div class="btn2" style="left:688px;top:633px;width:17px;height:17px;"><svg width="15" height="15" style="left:-1px;top:-1px"><path d="M9 3.5 L5 7.5 L9 11.5 Z" fill="#000"/></svg></div><div class="btn2" style="left:705px;top:633px;width:514px;height:17px;"></div><div class="btn2" style="left:1391px;top:633px;width:17px;height:17px;"><svg width="15" height="15" style="left:-1px;top:-1px"><path d="M6 3.5 L10 7.5 L6 11.5 Z" fill="#000"/></svg></div><div class="btn" style="left:1416px;top:277px;width:30px;height:26px;"><svg width="28" height="24" viewBox="0 0 28 24" style="left:0;top:0"><path d="M9.5 5.5 H17 L20.5 8.5 V19.5 H9.5 Z" fill="url(#gp)" stroke="#a8a8a0" stroke-width="1"/><path d="M17 6 V9 H20 Z" fill="#707070"/><circle cx="10.6" cy="12.3" r="3.6" fill="#6c8c28" stroke="#587020" stroke-width=".5"/><path d="M8.4 12.3 H12.8 M10.6 10.1 V14.5" stroke="#fff" stroke-width="1.4"/></svg></div><div class="btn" style="left:1416px;top:404px;width:30px;height:26px;"><svg width="28" height="24" viewBox="0 0 28 24" style="left:0;top:0"><g transform="translate(14,11.5) rotate(38)"><path d="M-8.5 -2.7 H2 V2.7 H-8.5 Q-10 0 -8.5 -2.7 Z" fill="#3858b0" stroke="#283878" stroke-width=".7"/><path d="M2 -2.7 L7.5 0 L2 2.7 Z" fill="#d8c090" stroke="#605040" stroke-width=".5"/><path d="M5.8 -0.9 L8 0 L5.8 0.9 Z" fill="#3050a0" stroke="#283878" stroke-width=".5"/></g></svg></div><div class="btn" style="left:1416px;top:531px;width:30px;height:26px;"><svg width="28" height="24" viewBox="0 0 28 24" style="left:0;top:0"><circle cx="14.1" cy="10.9" r="6.6" fill="url(#gr)" stroke="#802010" stroke-width=".5"/><path d="M11.3 8.1 L16.9 13.7 M16.9 8.1 L11.3 13.7" stroke="#fff" stroke-width="2.2" stroke-linecap="round"/></svg></div><span style="left:685.45px;top:661px;font-size:11px;line-height:15px;color:#000;white-space:pre;transform:scaleX(0.9833);transform-origin:0.55px 0;">Create New</span><div style="left:749px;top:659px;width:696px;height:18px;background:linear-gradient(180deg,#e0e0e0,#d4d4d4);border:1px solid;border-color:#808080 #000 #000 #808080"></div><div style="left:1268px;top:684px;width:177px;height:47px;border:1px solid;border-color:#a8a8a8 #fff #fff #a8a8a8;box-shadow:inset 1px 1px 0 #fff, inset -1px -1px 0 #a8a8a8"></div><div class="btn" style="left:1279px;top:695px;width:75px;height:26px;"><svg width="18" height="18" viewBox="0 0 18 18" style="left:6px;top:3px"><ellipse cx="8" cy="16" rx="5" ry=".9" fill="#000" opacity=".12"/><path d="M11 4.5 Q18 8.5 11 12.5 Z" fill="#c8c8c0" stroke="#9c9c94" stroke-width=".7"/><path d="M11.5 1.5 V15.5 L1.5 8.5 Z" fill="url(#ga)" stroke="#8c8c84" stroke-width=".9"/></svg></div><div class="btn" style="left:1360px;top:695px;width:75px;height:26px;"><svg width="18" height="18" viewBox="0 0 18 18" style="left:13px;top:3px"><ellipse cx="10" cy="16" rx="5" ry=".9" fill="#000" opacity=".12"/><path d="M7 4.5 Q0 8.5 7 12.5 Z" fill="#c8c8c0" stroke="#9c9c94" stroke-width=".7"/><path d="M6.5 1.5 V15.5 L16.5 8.5 Z" fill="url(#ga)" stroke="#8c8c84" stroke-width=".9"/></svg></div><span style="left:1305.00px;top:701px;font-size:11px;line-height:15px;color:#000;white-space:pre;transform:scaleX(0.9710);transform-origin:0.90px 0;">Previous</span><span style="left:1394.90px;top:701px;font-size:11px;line-height:15px;color:#000;white-space:pre;transform:scaleX(1.0353);transform-origin:0.90px 0;">Next</span><div style="left:666px;top:752px;width:800px;height:18px;background:linear-gradient(180deg,#ffff00 0,#ffff18 17%,#ffff70 33%,#ffffa0 50%,#ffffb0 75%,#ffffc0 100%)"></div><span style="left:671.05px;top:754px;font-size:11px;line-height:15px;color:#000;white-space:pre;transform:scaleX(0.9972);transform-origin:0.55px 0;">Choose minor strata (or create new one)</span><svg width="14" height="14" style="left:1452px;top:757px"><path d="M13 1 L1 13 M13 5 L5 13 M13 9 L9 13" stroke="#a0a0a0" stroke-width="1"/><path d="M13 2 L2 13 M13 6 L6 13 M13 10 L10 13" stroke="#fff" stroke-width="1"/></svg>
</div></body></html>
